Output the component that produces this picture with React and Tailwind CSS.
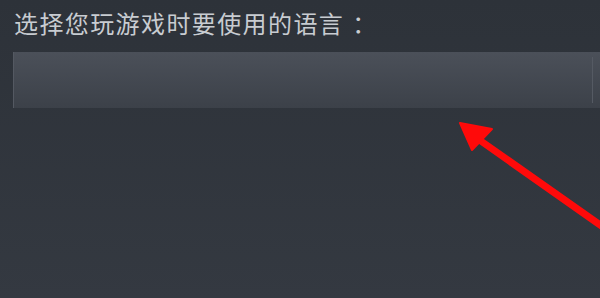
import React from "react";

function Arrow() {
  return (
    <svg className="absolute inset-0 pointer-events-none" width="600" height="298" viewBox="0 0 600 298">
      <line x1="478" y1="139" x2="630" y2="246" stroke="#ff0a0a" strokeWidth="7" strokeLinecap="round" />
      <polygon points="460,123 492,129 472,150" fill="#ff0a0a" stroke="#ff0a0a" strokeWidth="2" strokeLinejoin="round" />
    </svg>
  );
}

export default function App() {
  return (
    <div className="relative w-[600px] h-[298px] overflow-hidden bg-gradient-to-b from-[#2d3239] to-[#343941] font-['Noto_Sans_CJK_SC',sans-serif]">
      <div className="pl-[14px] pt-[6px]">
        <p className="text-[24px] leading-[34px] tracking-[1.4px] text-[#c8ccd1]">
          选择您玩游戏时要使用的语言<span className="ml-[8px]">：</span>
        </p>
      </div>
      <div className="ml-[13px] mt-[12px] h-[56px] flex bg-gradient-to-b from-[#4b5059] to-[#3c4149] border-l border-[#545962]">
        <div className="flex-1" />
        <div className="w-px my-[5px] bg-[#555a63]" />
        <div className="w-[7px]" />
      </div>
      <Arrow />
    </div>
  );
}
